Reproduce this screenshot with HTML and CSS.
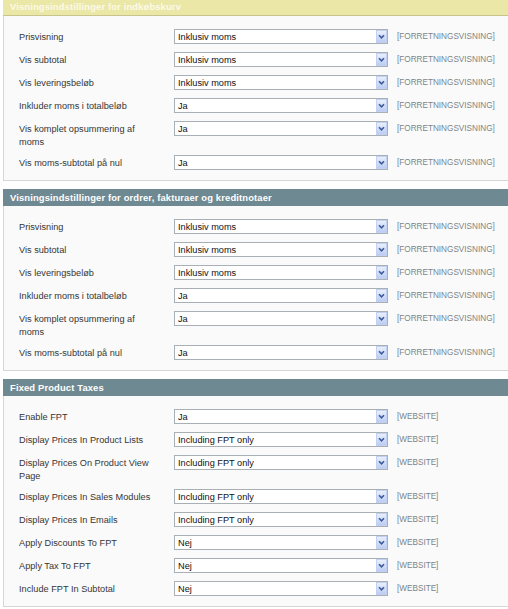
FILE: index.html
```html
<!DOCTYPE html>
<html lang="da">
<head>
<meta charset="utf-8">
<title>Moms</title>
<link rel="stylesheet" href="styles.css">
</head>
<body>
<div class="page">

  <section class="group">
    <div class="group-head head-active"><h4>Visningsindstillinger for indkøbskurv</h4></div>
    <div class="fieldset">
      <div class="row"><div class="label">Prisvisning</div><div class="select"><span class="select-value">Inklusiv moms</span><span class="select-btn"><svg viewBox="0 0 7 5" width="7" height="5"><path d="M1 1.2 L3.5 3.8 L6 1.2" fill="none" stroke="#3a5a9a" stroke-width="1.6"/></svg></span></div><div class="scope">[FORRETNINGSVISNING]</div></div>
      <div class="row"><div class="label">Vis subtotal</div><div class="select"><span class="select-value">Inklusiv moms</span><span class="select-btn"><svg viewBox="0 0 7 5" width="7" height="5"><path d="M1 1.2 L3.5 3.8 L6 1.2" fill="none" stroke="#3a5a9a" stroke-width="1.6"/></svg></span></div><div class="scope">[FORRETNINGSVISNING]</div></div>
      <div class="row"><div class="label">Vis leveringsbeløb</div><div class="select"><span class="select-value">Inklusiv moms</span><span class="select-btn"><svg viewBox="0 0 7 5" width="7" height="5"><path d="M1 1.2 L3.5 3.8 L6 1.2" fill="none" stroke="#3a5a9a" stroke-width="1.6"/></svg></span></div><div class="scope">[FORRETNINGSVISNING]</div></div>
      <div class="row"><div class="label">Inkluder moms i totalbeløb</div><div class="select"><span class="select-value">Ja</span><span class="select-btn"><svg viewBox="0 0 7 5" width="7" height="5"><path d="M1 1.2 L3.5 3.8 L6 1.2" fill="none" stroke="#3a5a9a" stroke-width="1.6"/></svg></span></div><div class="scope">[FORRETNINGSVISNING]</div></div>
      <div class="row"><div class="label">Vis komplet opsummering af moms</div><div class="select"><span class="select-value">Ja</span><span class="select-btn"><svg viewBox="0 0 7 5" width="7" height="5"><path d="M1 1.2 L3.5 3.8 L6 1.2" fill="none" stroke="#3a5a9a" stroke-width="1.6"/></svg></span></div><div class="scope">[FORRETNINGSVISNING]</div></div>
      <div class="row"><div class="label">Vis moms-subtotal på nul</div><div class="select"><span class="select-value">Ja</span><span class="select-btn"><svg viewBox="0 0 7 5" width="7" height="5"><path d="M1 1.2 L3.5 3.8 L6 1.2" fill="none" stroke="#3a5a9a" stroke-width="1.6"/></svg></span></div><div class="scope">[FORRETNINGSVISNING]</div></div>
    </div>
  </section>

  <section class="group">
    <div class="group-head"><h4>Visningsindstillinger for ordrer, fakturaer og kreditnotaer</h4></div>
    <div class="fieldset">
      <div class="row"><div class="label">Prisvisning</div><div class="select"><span class="select-value">Inklusiv moms</span><span class="select-btn"><svg viewBox="0 0 7 5" width="7" height="5"><path d="M1 1.2 L3.5 3.8 L6 1.2" fill="none" stroke="#3a5a9a" stroke-width="1.6"/></svg></span></div><div class="scope">[FORRETNINGSVISNING]</div></div>
      <div class="row"><div class="label">Vis subtotal</div><div class="select"><span class="select-value">Inklusiv moms</span><span class="select-btn"><svg viewBox="0 0 7 5" width="7" height="5"><path d="M1 1.2 L3.5 3.8 L6 1.2" fill="none" stroke="#3a5a9a" stroke-width="1.6"/></svg></span></div><div class="scope">[FORRETNINGSVISNING]</div></div>
      <div class="row"><div class="label">Vis leveringsbeløb</div><div class="select"><span class="select-value">Inklusiv moms</span><span class="select-btn"><svg viewBox="0 0 7 5" width="7" height="5"><path d="M1 1.2 L3.5 3.8 L6 1.2" fill="none" stroke="#3a5a9a" stroke-width="1.6"/></svg></span></div><div class="scope">[FORRETNINGSVISNING]</div></div>
      <div class="row"><div class="label">Inkluder moms i totalbeløb</div><div class="select"><span class="select-value">Ja</span><span class="select-btn"><svg viewBox="0 0 7 5" width="7" height="5"><path d="M1 1.2 L3.5 3.8 L6 1.2" fill="none" stroke="#3a5a9a" stroke-width="1.6"/></svg></span></div><div class="scope">[FORRETNINGSVISNING]</div></div>
      <div class="row"><div class="label">Vis komplet opsummering af moms</div><div class="select"><span class="select-value">Ja</span><span class="select-btn"><svg viewBox="0 0 7 5" width="7" height="5"><path d="M1 1.2 L3.5 3.8 L6 1.2" fill="none" stroke="#3a5a9a" stroke-width="1.6"/></svg></span></div><div class="scope">[FORRETNINGSVISNING]</div></div>
      <div class="row"><div class="label">Vis moms-subtotal på nul</div><div class="select"><span class="select-value">Ja</span><span class="select-btn"><svg viewBox="0 0 7 5" width="7" height="5"><path d="M1 1.2 L3.5 3.8 L6 1.2" fill="none" stroke="#3a5a9a" stroke-width="1.6"/></svg></span></div><div class="scope">[FORRETNINGSVISNING]</div></div>
    </div>
  </section>

  <section class="group">
    <div class="group-head"><h4>Fixed Product Taxes</h4></div>
    <div class="fieldset">
      <div class="row"><div class="label">Enable FPT</div><div class="select"><span class="select-value">Ja</span><span class="select-btn"><svg viewBox="0 0 7 5" width="7" height="5"><path d="M1 1.2 L3.5 3.8 L6 1.2" fill="none" stroke="#3a5a9a" stroke-width="1.6"/></svg></span></div><div class="scope">[WEBSITE]</div></div>
      <div class="row"><div class="label">Display Prices In Product Lists</div><div class="select"><span class="select-value">Including FPT only</span><span class="select-btn"><svg viewBox="0 0 7 5" width="7" height="5"><path d="M1 1.2 L3.5 3.8 L6 1.2" fill="none" stroke="#3a5a9a" stroke-width="1.6"/></svg></span></div><div class="scope">[WEBSITE]</div></div>
      <div class="row"><div class="label">Display Prices On Product View Page</div><div class="select"><span class="select-value">Including FPT only</span><span class="select-btn"><svg viewBox="0 0 7 5" width="7" height="5"><path d="M1 1.2 L3.5 3.8 L6 1.2" fill="none" stroke="#3a5a9a" stroke-width="1.6"/></svg></span></div><div class="scope">[WEBSITE]</div></div>
      <div class="row"><div class="label">Display Prices In Sales Modules</div><div class="select"><span class="select-value">Including FPT only</span><span class="select-btn"><svg viewBox="0 0 7 5" width="7" height="5"><path d="M1 1.2 L3.5 3.8 L6 1.2" fill="none" stroke="#3a5a9a" stroke-width="1.6"/></svg></span></div><div class="scope">[WEBSITE]</div></div>
      <div class="row"><div class="label">Display Prices In Emails</div><div class="select"><span class="select-value">Including FPT only</span><span class="select-btn"><svg viewBox="0 0 7 5" width="7" height="5"><path d="M1 1.2 L3.5 3.8 L6 1.2" fill="none" stroke="#3a5a9a" stroke-width="1.6"/></svg></span></div><div class="scope">[WEBSITE]</div></div>
      <div class="row"><div class="label">Apply Discounts To FPT</div><div class="select"><span class="select-value">Nej</span><span class="select-btn"><svg viewBox="0 0 7 5" width="7" height="5"><path d="M1 1.2 L3.5 3.8 L6 1.2" fill="none" stroke="#3a5a9a" stroke-width="1.6"/></svg></span></div><div class="scope">[WEBSITE]</div></div>
      <div class="row"><div class="label">Apply Tax To FPT</div><div class="select"><span class="select-value">Nej</span><span class="select-btn"><svg viewBox="0 0 7 5" width="7" height="5"><path d="M1 1.2 L3.5 3.8 L6 1.2" fill="none" stroke="#3a5a9a" stroke-width="1.6"/></svg></span></div><div class="scope">[WEBSITE]</div></div>
      <div class="row"><div class="label">Include FPT In Subtotal</div><div class="select"><span class="select-value">Nej</span><span class="select-btn"><svg viewBox="0 0 7 5" width="7" height="5"><path d="M1 1.2 L3.5 3.8 L6 1.2" fill="none" stroke="#3a5a9a" stroke-width="1.6"/></svg></span></div><div class="scope">[WEBSITE]</div></div>
    </div>
  </section>

</div>
</body>
</html>
```
FILE: styles.css
```css
html, body {
  margin: 0;
  padding: 0;
  background: #ffffff;
  overflow: hidden;
}

body {
  font-family: "Liberation Sans", Arial, sans-serif;
  color: #303030;
}

.page {
  margin: -1px 0 0 3px;
}

.group {
  margin-bottom: 8px;
}

.group-head {
  height: 17px;
  background: #6f8992;
  padding: 0 7px;
  box-sizing: border-box;
}

.group-head h4 {
  margin: 0;
  font-size: 9.4px;
  line-height: 17px;
  font-weight: bold;
  color: #ffffff;
  letter-spacing: 0.15px;
}

.head-active {
  background: #ebe7a7;
  border-bottom: 1px solid #c9c48c;
}

.head-active h4 {
  line-height: 16px;
  color: #fbfae8;
}

.fieldset {
  background: #fafafa;
  border: 1px solid #d6d6d6;
  border-top: 0;
  border-right: 0;
  padding: 9px 0 6px 15px;
}

.row {
  display: flex;
  align-items: flex-start;
  padding: 4px 0;
}

.label {
  width: 136px;
  flex: none;
  padding: 2px 19px 0 0;
  margin-bottom: -2px;
  font-size: 9.2px;
  line-height: 13px;
  color: #363636;
}

.select {
  width: 214px;
  flex: none;
  height: 15px;
  box-sizing: border-box;
  border: 1px solid #a9b0b5;
  background: #ffffff;
  display: flex;
  align-items: stretch;
}

.select-value {
  flex: 1;
  padding-left: 3px;
  font-size: 9.2px;
  line-height: 14px;
  color: #111111;
}

.select-btn {
  width: 11px;
  box-sizing: border-box;
  border: 1px solid #c2d1f3;
  background: linear-gradient(#e9effc, #bccdf2);
  display: flex;
  align-items: center;
  justify-content: center;
}

.select-btn svg {
  display: block;
}

.scope {
  margin-left: 9px;
  height: 15px;
  font-size: 8.2px;
  line-height: 15px;
  color: #7b8588;
  white-space: nowrap;
}
```
